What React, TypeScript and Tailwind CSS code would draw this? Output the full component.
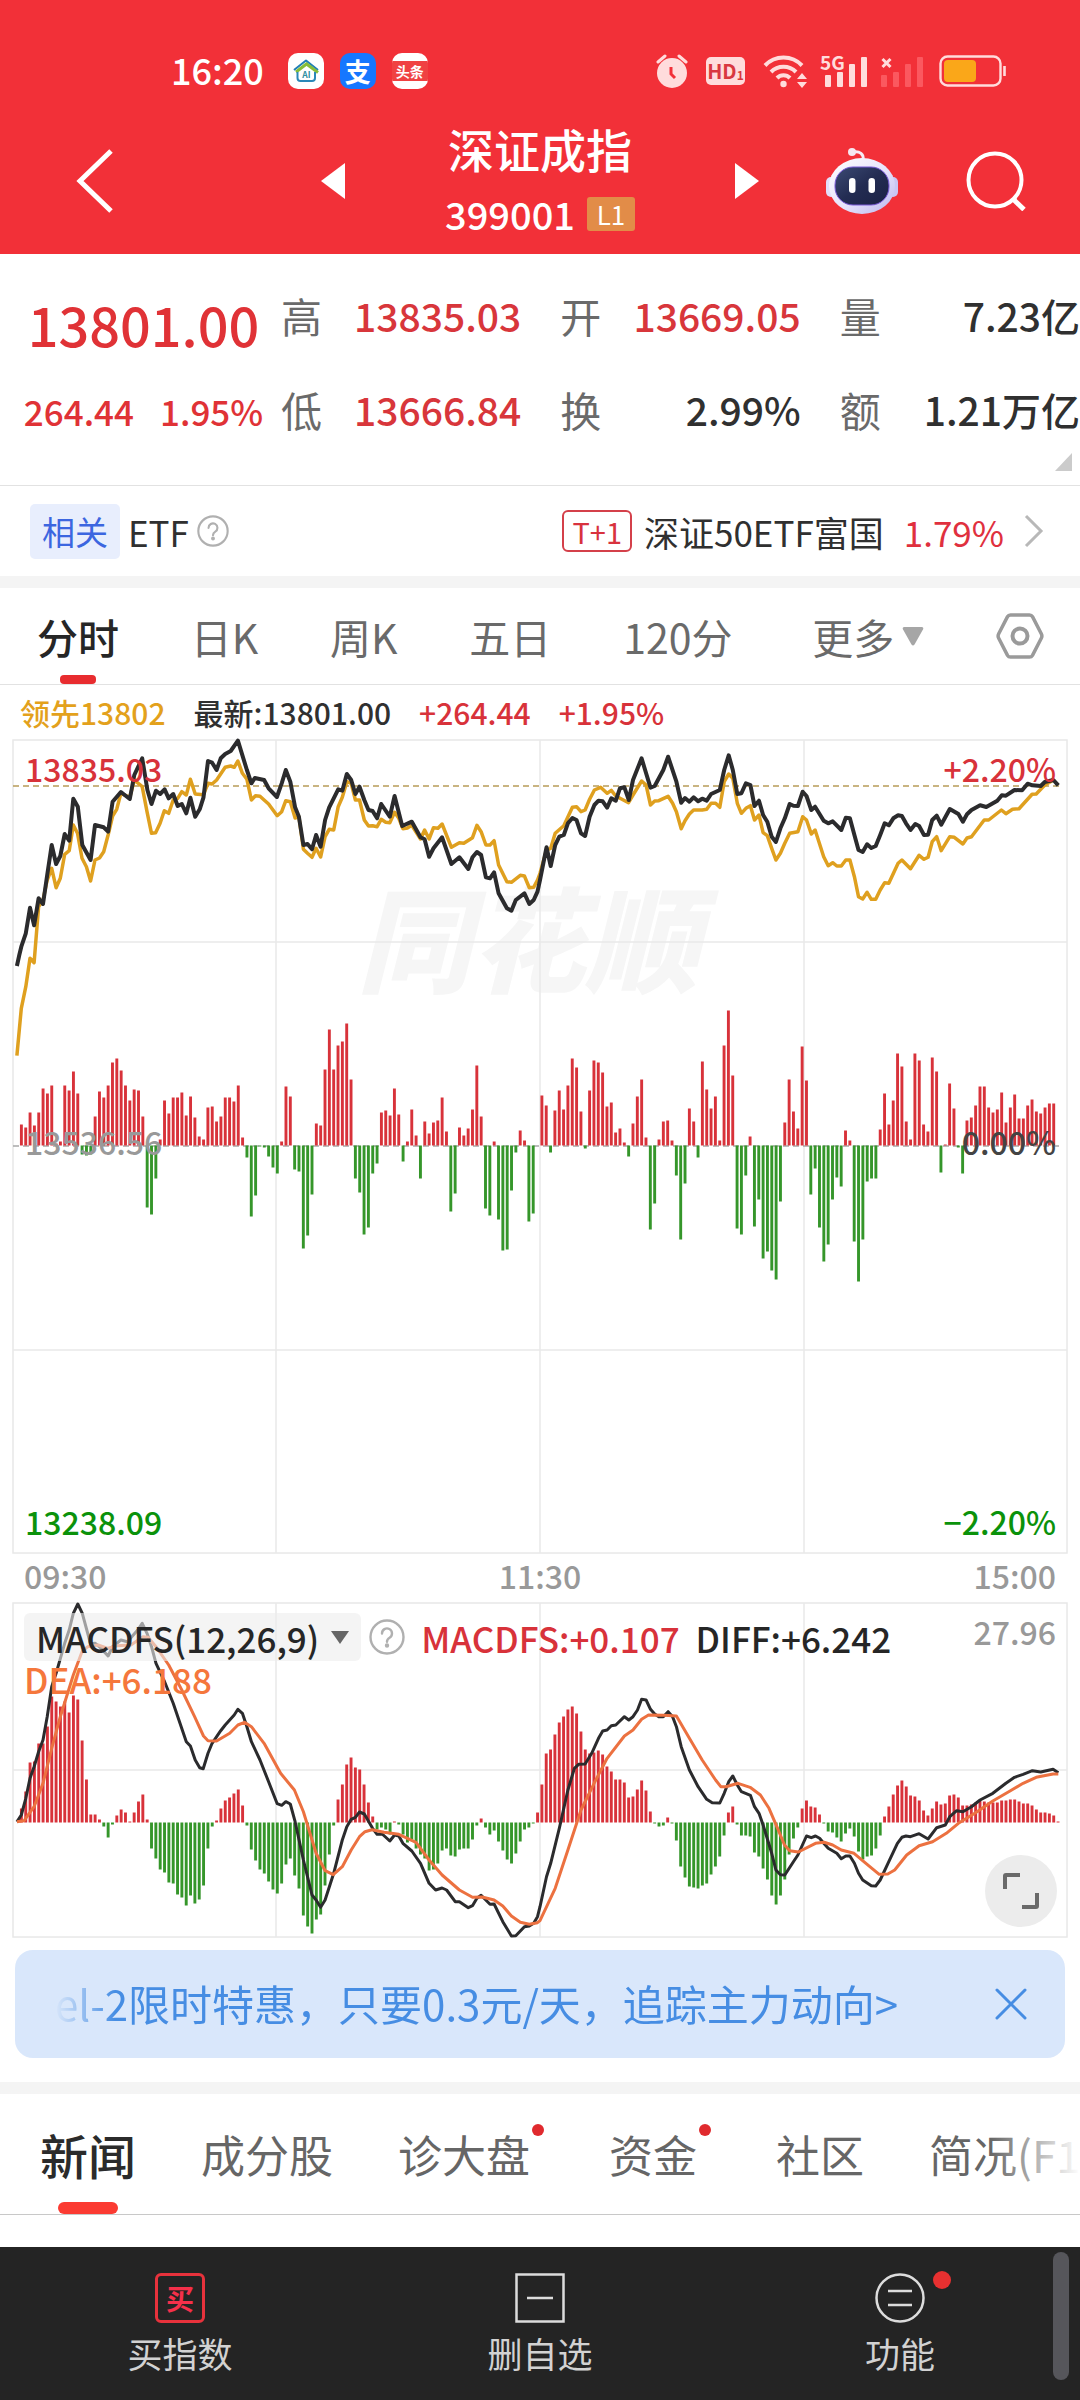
import React from "react";

const RED = "#d8323a";
const GREEN = "#35962a";
const INK = "#2b2b2d";

/* Minute bars above and below the zero line, one entry per minute from 09:31. */
const flow = [
  21, 18, 33, 20, 33, 57, 52, 60, 2, 4, 60, 55, 74, 52, -9, -10, -9, 29, 54, 48, 60, 83, 87, 75, 60, 45, 56, 55, 29, -62,
  -69, -33, 6, 45, 32, 48, 48, 53, 30, 49, 28, 9, 6, 38, 39, 24, 29, 48, 48, 44, 60, 8, -12, -71, -50, -1, -2, -11, -22, -28,
  4, 59, 49, -24, -26, -103, -90, -49, 22, 20, 76, 116, 76, 100, 104, 122, 66, -33, -47, -89, -82, -28, -18, 33, 35, 30, 57, 31, -16, 4,
  36, 10, -33, 24, 12, 23, 25, 48, 14, -66, -48, 18, 10, 17, 36, 80, 29, -63, -70, 4, -74, -105, -104, -45, -7, 15, 5, -76, -68, 0,
  50, 40, -7, 35, 55, 36, 60, 87, 78, 34, -3, 55, 85, 83, 73, 39, 43, 13, 17, 3, -11, 22, 49, 66, 8, -84, -58, 6, 24, 25,
  5, -30, -94, -38, 37, 24, -12, 84, 56, 37, 49, 5, 100, 135, 70, -83, -89, -30, 9, -81, -54, -113, -106, -125, -134, -56, 23, 66, 34, 17,
  99, 65, -49, -23, -82, -116, -99, -54, -32, -41, 15, 5, -96, -136, -94, -36, -33, -33, 16, 52, 21, 45, 92, 79, 24, 6, 92, 85, 21, 14,
  88, 74, -27, 1, 62, 37, -2, -28, 25, 28, 40, 59, 59, 38, 33, 36, 53, 23, 38, 51, 27, 27, 40, 46, 34, 32, 38, 42, 42, 0,
];

const macd = [
  14, 31, 60, 61, 79, 79, 96, 126, 121, 116, 121, 110, 127, 123, 82, 43, 8, 8, 3, -4, -15, -2, 7, 13, 10, 1, 10, 21, 28, 3,
  -26, -36, -47, -50, -60, -61, -72, -75, -83, -73, -81, -77, -63, -26, -4, 2, 14, 22, 25, 29, 33, 17, -3, -27, -38, -47, -51, -59, -67, -71,
  -61, -42, -36, -53, -66, -93, -104, -111, -97, -92, -63, -32, -3, 23, 38, 58, 65, 55, 53, 38, 20, 6, -7, -5, -7, -12, 1, -2, -12, -20,
  -17, -26, -32, -36, -48, -47, -41, -28, -26, -33, -34, -27, -26, -26, -17, -3, 4, -5, -12, -8, -19, -28, -37, -41, -31, -19, -7, -5, -1, 10,
  38, 69, 73, 88, 100, 106, 113, 116, 109, 91, 73, 69, 70, 72, 68, 56, 51, 43, 43, 40, 25, 26, 33, 42, 32, 11, -1, -4, -3, 5,
  -1, -18, -44, -55, -64, -65, -66, -63, -61, -52, -44, -34, -13, 10, 16, -2, -13, -13, -14, -30, -34, -46, -57, -73, -82, -73, -57, -32, -16, -5,
  14, 22, 16, 15, 8, -1, -9, -10, -15, -19, -11, -6, -14, -29, -37, -34, -33, -26, -13, 6, 16, 28, 37, 42, 36, 27, 26, 22, 12, 7,
  14, 21, 18, 19, 27, 28, 25, 17, 17, 18, 20, 22, 21, 20, 20, 20, 22, 22, 23, 23, 21, 19, 19, 17, 13, 10, 10, 9, 7, 1,
];

/* Line samples, stored at about three times the chart's scale, one string per half of the session. */
const price = [
  "49,738 56,705 62,680 75,640 87,563 99,616 112,535 125,552 137,465 150,375 163,432 175,408 188,342 201,362 213,236 226,260 239,375 263,420 276,315 301,322 314,335 327,245 351,216 377,237 390,165 413,115 428,210 440,252 453,212 465,222 478,208 490,235 503,222 516,258 528,252 541,280 553,233 567,290 580,268 591,232 604,123 616,128 629,150 641,115 654,102 670,93 691,62 717,150 730,190 740,174 767,180 780,205 804,231 818,190 830,150 843,185 857,262 868,290 881,375 893,372 906,388 918,345 931,380 944,300 956,262 969,235 982,208 994,212 1007,162 1020,180 1032,222 1044,200 1058,240 1070,270 1082,273 1095,295 1107,252 1132,290 1146,228 1168,318 1196,305 1221,352 1233,358 1246,410 1259,385 1284,352 1311,432 1334,412 1360,447 1372,412 1385,396 1397,405 1411,472 1423,475 1435,457 1448,520 1472,565 1485,572 1498,540 1523,520 1537,552 1550,540 1561,515",
  "0,480 19,382 31,438 44,375 56,350 69,345 81,310 94,294 106,300 119,340 131,348 144,290 158,255 170,242 182,244 195,263 207,235 220,242 232,205 245,202 258,240 270,180 295,115 308,160 321,203 333,198 358,150 372,110 396,185 410,248 421,234 434,245 446,232 459,244 471,236 484,242 497,222 522,210 535,150 548,106 560,150 573,222 585,220 598,190 611,195 623,258 636,242 648,285 660,305 673,350 685,366 698,325 711,295 725,252 736,257 749,258 763,215 774,228 788,270 799,260 824,302 837,310 850,304 875,330 888,293 900,295 913,345 925,390 937,396 950,373 962,384 975,378 988,345 1001,310 1013,316 1026,295 1040,286 1051,288 1063,310 1076,330 1090,312 1101,318 1115,345 1127,344 1139,300 1152,287 1165,314 1190,267 1215,282 1228,305 1240,283 1253,270 1278,256 1296,261 1328,242 1341,226 1353,227 1378,210 1400,211 1416,191 1430,196 1454,198 1466,186 1491,180 1505,196",
];
const lead = [
  "49,1007 62,865 75,800 87,715 99,728 112,560 125,540 137,480 150,445 163,503 175,475 188,403 201,392 213,315 225,340 238,415 251,440 263,483 276,420 289,414 301,395 314,345 327,288 339,268 351,220 377,232 390,180 413,200 427,275 440,340 452,338 465,310 477,272 490,280 503,240 516,235 528,215 541,225 553,178 567,222 591,224 604,190 616,192 629,180 654,142 670,138 680,142 691,123 704,160 717,178 730,240 742,227 755,229 767,240 780,252 805,287 818,275 830,242 843,245 857,294 868,290 881,388 893,400 906,412 918,385 931,411 944,350 956,328 969,330 982,260 994,232 1007,185 1020,190 1032,240 1044,240 1058,300 1070,318 1082,317 1095,320 1107,298 1120,307 1132,308 1146,277 1158,295 1170,326 1183,324 1196,316 1221,357 1233,330 1246,357 1259,323 1272,325 1284,312 1311,382 1334,368 1347,370 1372,353 1385,316 1397,335 1411,375 1423,375 1435,362 1448,435 1472,485 1485,487 1511,466 1523,468 1537,503 1550,502 1561,480",
  "0,460 19,390 31,385 44,340 69,317 94,262 106,260 119,275 131,270 144,238 158,210 176,202 195,220 207,211 220,228 257,248 270,225 295,183 308,195 321,255 333,243 345,242 372,229 385,250 396,275 410,326 421,302 434,282 446,270 471,270 484,268 497,250 510,250 522,262 535,185 548,162 560,175 573,250 585,280 598,265 611,257 623,300 636,285 648,338 660,347 673,385 685,420 698,400 711,370 725,340 749,335 763,290 774,300 788,342 799,330 824,410 837,437 850,428 862,438 875,438 888,420 900,420 913,470 925,530 937,537 950,517 962,538 975,538 988,510 1001,488 1013,490 1040,430 1051,420 1076,446 1101,406 1115,418 1127,412 1139,365 1152,350 1165,392 1190,350 1203,352 1228,372 1240,354 1253,350 1290,300 1303,300 1340,270 1353,281 1372,268 1391,266 1429,223 1441,222 1466,195 1491,180",
];
const diff = [
  "49,965 62,945 75,895 87,835 99,800 112,755 125,720 137,650 150,560 163,520 188,430 201,390 213,340 226,312 239,340 263,432 276,430 289,440 314,468 327,440 351,420 370,425 400,390 413,370 427,400 440,440 453,490 478,545 503,610 541,725 553,738 567,780 580,803 590,806 604,760 616,730 641,692 654,675 680,645 691,628 704,640 717,680 730,725 755,780 780,845 805,911 818,916 830,905 843,912 857,965 881,1080 906,1185 918,1200 931,1222 944,1200 969,1120 994,1020 1007,980 1020,958 1032,952 1044,936 1058,942 1082,985 1095,1003 1110,1002 1132,1023 1146,1005 1158,1008 1170,1030 1196,1053 1221,1090 1246,1150 1265,1170 1284,1164 1297,1170 1322,1205 1334,1205 1360,1223 1372,1217 1385,1195 1397,1186 1423,1213 1435,1212 1460,1265 1485,1308 1498,1307 1523,1280 1537,1278 1550,1270 1561,1250",
  "0,1220 19,1130 31,1090 56,985 81,870 100,805 112,793 131,792 150,760 170,715 182,693 195,690 207,677 220,675 245,650 258,660 270,650 283,630 295,598 308,600 321,628 333,642 345,650 358,650 372,635 385,650 396,680 410,740 434,810 459,860 484,898 500,908 522,909 535,880 548,845 560,828 573,855 585,875 611,886 623,920 636,940 648,975 673,1060 685,1110 698,1124 711,1125 736,1085 749,1065 774,1008 788,1013 800,1008 812,1015 824,1030 837,1045 862,1060 875,1076 888,1068 900,1068 913,1090 925,1120 937,1140 962,1157 975,1158 988,1140 1013,1085 1038,1030 1051,1012 1063,1008 1076,1010 1101,1001 1127,1017 1152,983 1177,975 1190,950 1210,932 1228,935 1253,920 1278,900 1315,880 1353,850 1378,832 1403,823 1430,812 1454,816 1490,808 1505,818",
];
const dea = [
  "49,965 70,962 99,920 125,850 150,745 175,650 213,525 238,455 255,440 285,435 314,445 340,437 380,435 415,410 430,412 453,440 490,495 528,570 565,650 591,708 604,722 629,723 667,700 691,675 710,667 730,680 767,730 815,820 855,870 881,935 918,1060 944,1112 968,1124 994,1100 1020,1050 1044,1010 1060,995 1080,989 1115,997 1158,1003 1208,1027 1246,1080 1284,1125 1334,1170 1372,1192 1400,1191 1435,1200 1460,1218 1485,1248 1511,1267 1537,1273 1561,1268",
  "0,1262 44,1165 81,1050 119,930 157,850 195,775 245,708 270,690 295,658 315,645 360,646 396,648 434,715 471,780 510,840 525,860 540,860 575,850 610,862 640,885 665,925 690,985 710,1035 725,1052 750,1056 800,1030 825,1027 850,1035 875,1050 912,1060 950,1093 985,1123 1010,1122 1030,1110 1065,1065 1101,1037 1140,1025 1180,1000 1215,970 1265,938 1315,903 1365,873 1403,850 1441,832 1490,822 1505,822",
];

const toPoints = (halves: string[], top: number) =>
  halves
    .flatMap((half, h) =>
      half.split(" ").map((pair) => {
        const [x, y] = pair.split(",").map(Number);
        return `${(x / 2.904 + h * 540).toFixed(1)},${(y / 3 + top).toFixed(1)}`;
      }),
    )
    .join(" ");

function Bars({ values, zero }: { values: number[]; zero: number }) {
  return (
    <g>
      {values.map((v, i) => (
        <rect
          key={i}
          x={17 + (i + 1) * 4.3375 - 1.4}
          y={v >= 0 ? zero - v : zero}
          width={2.9}
          height={Math.abs(v)}
          fill={v >= 0 ? RED : GREEN}
        />
      ))}
    </g>
  );
}

function Grid({ top, bottom, rows }: { top: number; bottom: number; rows: number[] }) {
  return (
    <g stroke="#e8e8e8" strokeWidth="1.5" fill="none">
      <rect x="13" y={top} width="1054" height={bottom - top} />
      {[276, 540, 804].map((x) => (
        <line key={x} x1={x} x2={x} y1={top} y2={bottom} />
      ))}
      {rows.map((y) => (
        <line key={y} x1="13" x2="1067" y1={y} y2={y} />
      ))}
    </g>
  );
}

function Help({ className }: { className: string }) {
  return (
    <svg className={className} viewBox="0 0 36 36" fill="none" stroke="#b0b0b0" strokeWidth="2.4" aria-hidden="true">
      <circle cx="18" cy="18" r="16.5" />
      <path d="M13 14.5a5 5 0 1 1 7.6 4.2c-1.800 1.100-2.600 1.900-2.600 4" strokeLinecap="round" />
      <circle cx="18" cy="26.500" r="1" fill="#b0b0b0" />
    </svg>
  );
}

function StatusBar() {
  return (
    <div className="flex h-[116px] items-center justify-between pt-[26px] pr-[74px] pl-[171px] text-white">
      <div className="flex items-center gap-4">
        <time className="mr-2 pb-1 text-[36px] leading-none font-medium">16:20</time>
        <svg className="size-9" viewBox="0 0 36 36" aria-label="AI home">
          <rect width="36" height="36" rx="10" fill="#fff" />
          <path d="M6 17 18 7.500 30 17" fill="none" stroke="#1f7fb5" strokeWidth="2" strokeLinejoin="round" />
          <path d="M8 19 18.500 11 30 19.500" fill="none" stroke="#86bd3a" strokeWidth="3" />
          <path d="M9.500 19v6q0 3 3 3h11.500q3 0 3-3v-6" fill="none" stroke="#2a88b8" strokeWidth="2" />
          <text x="18.500" y="25" textAnchor="middle" fontSize="8.500" fontWeight="700" fill="#3090a0">AI</text>
        </svg>
        <span className="flex size-9 items-center justify-center rounded-[10px] bg-[#1677ff] text-[26px] leading-none font-bold">支</span>
        <span className="flex size-9 items-center overflow-hidden rounded-[10px] bg-white">
          <span className="flex h-5 w-full items-center justify-center bg-[#f04142] text-[14px] leading-none font-bold">头条</span>
        </span>
      </div>
      <div className="flex items-center gap-[13px]">
        <svg className="mr-[5px]" width="32" height="36" viewBox="0 0 32 36" fill="none" stroke="#ffdcdc" aria-label="Alarm">
          <circle cx="16" cy="20" r="15" fill="#ffdcdc" stroke="none" />
          <path d="M2 9 9 3M30 9 23 3" strokeWidth="3" strokeLinecap="round" />
          <path d="M15 14v7l4 4" stroke="#f23038" strokeWidth="3" />
        </svg>
        <span className="mr-[5px] flex h-7 w-[39px] items-center justify-center rounded-[5px] bg-[#ffdcdc] text-[20px] leading-none font-bold text-[#d93840]">
          HD<span className="pt-2 text-[12px] leading-none">1</span>
        </span>
        <svg width="45" height="36" viewBox="0 0 45 36" fill="none" stroke="#ffdcdc" strokeWidth="4" aria-label="Wi-Fi">
          <path d="M2 12.500a25.500 25.500 0 0 1 37 0M8 19a17.500 17.500 0 0 1 25 0M14 25a9 9 0 0 1 13 0" />
          <circle cx="20.500" cy="31" r="3.200" fill="#ffdcdc" stroke="none" />
          <path d="m34 26 5-6 5 6zM34 29l5 6 5-6z" fill="#ffdcdc" stroke="none" />
        </svg>
        <svg className="overflow-visible" width="47" height="34" viewBox="0 0 47 34" fill="#ffdcdc" aria-label="5G signal">
          <rect x="4" y="21" width="6" height="12" rx="1" />
          <rect x="16" y="18" width="6" height="15" rx="1" />
          <rect x="28" y="10" width="6" height="23" rx="1" />
          <rect x="40" y="3" width="6" height="30" rx="1" />
          <text x="-1" y="16" fontSize="19" fontWeight="700">5G</text>
        </svg>
        <svg width="43" height="34" viewBox="0 0 43 34" fill="#ff6a70" aria-label="No signal">
          <path d="m1.500 5 8 8m0-8-8 8" stroke="#ffdcdc" strokeWidth="3" />
          <rect x="0" y="21" width="6" height="12" rx="1" opacity=".7" />
          <rect x="12" y="18" width="6" height="15" rx="1" opacity=".7" />
          <rect x="24" y="10" width="6" height="23" rx="1" opacity=".7" />
          <rect x="36" y="3" width="6" height="30" rx="1" opacity=".7" />
        </svg>
        <svg className="ml-0.5" width="67" height="32" viewBox="0 0 67 32" fill="none" aria-label="Battery">
          <rect x="1.500" y="1.500" width="60" height="29" rx="7" stroke="#ffdcdc" strokeWidth="2.400" />
          <rect x="5" y="5" width="32" height="22" rx="4" fill="#faa719" />
          <path d="M65.500 11v10" stroke="#ffdcdc" strokeWidth="2.600" />
        </svg>
      </div>
    </div>
  );
}

function Robot() {
  return (
    <svg width="72" height="68" viewBox="0 0 72 68" aria-hidden="true">
      <defs>
        <linearGradient id="shell" x1="0" y1="0" x2="1" y2="1">
          <stop offset="0" stopColor="#ffffff" />
          <stop offset=".55" stopColor="#e6e2fb" />
          <stop offset="1" stopColor="#b9b6ee" />
        </linearGradient>
        <linearGradient id="visor" x1="0" y1="0" x2="1" y2="1">
          <stop offset="0" stopColor="#3c4a74" />
          <stop offset=".5" stopColor="#232c52" />
          <stop offset="1" stopColor="#1b2145" />
        </linearGradient>
      </defs>
      <path d="M37 13c1-6-3-9-10-8" fill="none" stroke="#f6ecf6" strokeWidth="3" />
      <circle cx="26" cy="5" r="4" fill="#f6e6f0" />
      <rect x="0" y="30" width="10" height="20" rx="5" fill="#e2defa" />
      <rect x="62" y="30" width="10" height="20" rx="5" fill="#c9c6f4" />
      <ellipse cx="36" cy="39" rx="33" ry="28" fill="url(#shell)" />
      <rect x="9" y="20" width="54" height="38" rx="18" fill="url(#visor)" stroke="#7a5ad8" strokeWidth="1" />
      <rect x="23" y="31" width="6.500" height="15" rx="3.200" fill="#fff" />
      <rect x="42.500" y="31" width="6.500" height="15" rx="3.200" fill="#fff" />
    </svg>
  );
}

function Header() {
  return (
    <header className="bg-[#f23038] text-white">
      <StatusBar />
      <div className="grid h-[138px] grid-cols-[1fr_auto_1fr] items-center px-[54px] pb-2">
        <button type="button" aria-label="返回" className="pl-[21px] justify-self-start">
          <svg width="40" height="66" viewBox="0 0 40 66" fill="none" stroke="#fff" strokeWidth="5">
            <path d="M36 3 5 33 36 63" />
          </svg>
        </button>
        <div className="flex w-[438px] items-center justify-between">
          <button type="button" aria-label="上一个">
            <svg width="24" height="36" viewBox="0 0 24 36" fill="#fff"><path d="M24 0v36L0 18z" /></svg>
          </button>
          <div className="flex flex-col items-center gap-[10px]">
            <h1 className="text-[46px] leading-[56px] font-medium">深证成指</h1>
            <p className="flex items-center gap-3 text-[38px] leading-[56px] font-medium">
              399001
              <span className="flex h-[34px] w-12 items-center justify-center rounded-[3px] bg-[#e28c48] text-[26px] leading-none font-normal">L1</span>
            </p>
          </div>
          <button type="button" aria-label="下一个">
            <svg width="24" height="36" viewBox="0 0 24 36" fill="#fff"><path d="M0 0v36l24-18z" /></svg>
          </button>
        </div>
        <div className="flex items-center gap-[68px] justify-self-end">
          <button type="button" aria-label="智能助手"><Robot /></button>
          <button type="button" aria-label="搜索">
            <svg width="60" height="60" viewBox="0 0 60 60" fill="none" stroke="#fff" strokeWidth="4">
              <circle cx="29" cy="29" r="26.500" />
              <path d="m47 48 11 10.500" strokeWidth="5" />
            </svg>
          </button>
        </div>
      </div>
    </header>
  );
}

const quotes = [
  { label: "高", value: "13835.03", up: true },
  { label: "开", value: "13669.05", up: true },
  { label: "量", value: "7.23亿", up: false },
  { label: "低", value: "13666.84", up: true },
  { label: "换", value: "2.99%", up: false },
  { label: "额", value: "1.21万亿", up: false },
];

function Quotes() {
  return (
    <section className="relative flex border-b border-[#e2e2e2] pt-[14px] pb-[29px]">
      <div className="flex w-[281px] shrink-0 flex-col items-center pl-[6px] font-medium text-[#e03236]">
        <p className="text-[54px] leading-[112px]">13801.00</p>
        <p className="flex gap-[26px] text-[35px] leading-[62px]">
          <span>264.44</span>
          <span>1.95%</span>
        </p>
      </div>
      <dl className="grid flex-1 grid-cols-3 gap-x-[39px] text-[39px] leading-[94px]">
        {quotes.map((q) => (
          <div key={q.label} className="flex items-center justify-between whitespace-nowrap">
            <dt className="text-[41px] text-[#6a6a6a]">{q.label}</dt>
            <dd className={q.up ? "font-medium text-[#d8363b]" : "font-medium text-[#303030]"}>{q.value}</dd>
          </div>
        ))}
      </dl>
      <svg className="absolute right-2 bottom-[14px]" width="17" height="18" viewBox="0 0 17 18" fill="#cbcbcb" aria-hidden="true">
        <path d="M17 0v18H0z" />
      </svg>
    </section>
  );
}

function Related() {
  return (
    <section className="flex h-[90px] items-center justify-between pr-[36px] pl-[30px] text-[35px] leading-none text-[#303030]">
      <div className="flex items-center gap-2">
        <span className="rounded-[5px] bg-[#e8eefd] px-3 text-[33px] leading-[55px] text-[#3c66e0]">相关</span>
        ETF
        <button type="button" aria-label="说明"><Help className="size-8" /></button>
      </div>
      <a href="#etf" className="flex items-center">
        <span className="rounded-[6px] border-2 border-[#d4404a] px-2 text-[29px] leading-[38px] text-[#d8323e]">T+1</span>
        <span className="ml-3">深证50ETF富国</span>
        <span className="ml-5 text-[#e0303e]">1.79%</span>
        <svg className="ml-5" width="20" height="34" viewBox="0 0 20 34" fill="none" stroke="#b8b8b8" strokeWidth="3" aria-hidden="true">
          <path d="m2 2 15 15L2 32" />
        </svg>
      </a>
    </section>
  );
}

function PeriodTabs() {
  return (
    <nav className="flex h-[97px] items-center justify-between border-b border-[#e2e2e2] pr-9 pl-[37px] text-[41px] leading-none text-[#6a6a6a]">
      <button type="button" aria-current="true" className="relative h-full font-medium text-[#262626]">
        分时
        <span className="absolute bottom-0 left-1/2 h-[9px] w-9 -translate-x-1/2 rounded-[4px] bg-[#e82c2f]" />
      </button>
      {["日K", "周K", "五日", "120分"].map((t) => (
        <button key={t} type="button">{t}</button>
      ))}
      <button type="button" className="flex items-center gap-2 pl-2">
        更多
        <svg width="22" height="19" viewBox="0 0 22 19" fill="#a6a6a6" aria-hidden="true">
          <path d="M2 0h18q2 .5 1 2.500L12.500 17.500q-1.500 2-3 0L1 2.500Q0 .5 2 0z" />
        </svg>
      </button>
      <button type="button" aria-label="设置">
        <svg width="48" height="46" viewBox="0 0 48 46" fill="none" stroke="#9a9a9a">
          <path d="M14.500 2h19q2 0 3 1.700l8.800 17q1.200 2.300 0 4.600l-8.800 17Q35.500 44 33.500 44h-19q-2 0-3-1.700l-8.800-17q-1.200-2.300 0-4.600l8.800-17Q12.500 2 14.500 2z" strokeWidth="3.500" />
          <circle cx="24" cy="23" r="7.500" strokeWidth="4" />
        </svg>
      </button>
    </nav>
  );
}

function PriceChart() {
  return (
    <section className="mx-3">
      <p className="flex gap-7 pl-2 text-[30px] leading-[55px] font-medium text-[#d8323a]">
        <span className="text-[#e3a11c]">领先13802</span>
        <span className="text-[#303030]">最新:13801.00</span>
        <span>+264.44</span>
        <span>+1.95%</span>
      </p>
      <div className="relative text-[32px] leading-none font-medium">
        <svg className="block h-auto w-full overflow-visible" viewBox="12 740 1056 813" role="img" aria-label="分时走势">
          <text x="528" y="984" textAnchor="middle" fontSize="114" fontWeight="900" fontStyle="italic" fill="#f6f6f6">同花顺</text>
          <Grid top={740} bottom={1553} rows={[942, 1350]} />
          <line x1="13" x2="1062" y1="786" y2="786" stroke="#b89c58" strokeWidth="1.500" strokeDasharray="6 4" />
          <line x1="13" x2="1062" y1="1146" y2="1146" stroke="#a8a8a8" strokeWidth="1.500" strokeDasharray="6 4" />
          <Bars values={flow} zero={1145.500} />
          <polyline points={toPoints(lead, 720)} fill="none" stroke="#dfa01f" strokeWidth="3.500" strokeLinejoin="round" />
          <polyline points={toPoints(price, 720)} fill="none" stroke={INK} strokeWidth="4" strokeLinejoin="round" />
        </svg>
        <span className="absolute top-3 left-[13px] text-[#d8323a]">13835.03</span>
        <span className="absolute top-3 right-3 text-[#d8323a]">+2.20%</span>
        <span className="absolute top-1/2 left-[13px] -translate-y-[22px] text-[#999]">13536.56</span>
        <span className="absolute top-1/2 right-3 -translate-y-[22px] text-[#444]">0.00%</span>
        <span className="absolute bottom-4 left-[13px] text-[#0b920b]">13238.09</span>
        <span className="absolute right-3 bottom-4 text-[#0b920b]">−2.20%</span>
      </div>
      <div className="flex justify-between px-3 pb-1 text-[32px] leading-[45px] font-medium text-[#999]">
        <time>09:30</time>
        <time>11:30</time>
        <time>15:00</time>
      </div>
    </section>
  );
}

function MacdChart() {
  return (
    <section className="relative mx-3">
      <svg className="block h-auto w-full" viewBox="12 1602 1056 336" role="img" aria-label="MACDFS">
        <Grid top={1603} bottom={1937} rows={[1770]} />
        <Bars values={macd} zero={1822.500} />
        <polyline points={toPoints(diff, 1500)} fill="none" stroke={INK} strokeWidth="3" strokeLinejoin="round" />
        <polyline points={toPoints(dea, 1500)} fill="none" stroke="#ec7140" strokeWidth="3" strokeLinejoin="round" />
      </svg>
      <div className="absolute inset-x-3 top-[11px] text-[35px] leading-none font-medium">
        <div className="flex items-center">
          <button type="button" className="flex h-12 items-center gap-3 rounded-[6px] bg-[#ececec]/60 px-3 text-[#262626]">
            MACDFS(12,26,9)
            <svg width="18" height="13" viewBox="0 0 18 13" fill="#666" aria-hidden="true"><path d="M0 0h18L9 13z" /></svg>
          </button>
          <button type="button" aria-label="指标说明" className="ml-2"><Help className="size-9" /></button>
          <span className="ml-4 text-[#d8323a]">MACDFS:+0.107</span>
          <span className="ml-4 text-[#262626]">DIFF:+6.242</span>
          <span className="mb-3 ml-auto text-[32px] text-[#999]">27.96</span>
        </div>
        <p className="text-[#f5773c]">DEA:+6.188</p>
      </div>
      <button type="button" aria-label="全屏" className="absolute right-[11px] bottom-[11px] flex size-[72px] items-center justify-center rounded-full bg-[#ececec]">
        <svg width="38" height="38" viewBox="0 0 38 38" fill="none" stroke="#6a6a6a" strokeWidth="4">
          <path d="M3 17V4q0-1 1-1h14M35 21v13q0 1-1 1H20" />
        </svg>
      </button>
    </section>
  );
}

function Banner() {
  return (
    <aside className="mx-[15px] mt-3 mb-6 flex h-[108px] items-center justify-between rounded-[18px] bg-[#d9e7fb] pr-[38px] pl-10 text-[#468de3]">
      <a href="#level2" className="overflow-hidden pb-0.5 text-[42px] leading-[60px] whitespace-nowrap [mask-image:linear-gradient(to_right,transparent,black_60px)]">
        el-2限时特惠，只要0.3元/天，追踪主力动向&gt;
      </a>
      <button type="button" aria-label="关闭">
        <svg width="32" height="32" viewBox="0 0 32 32" fill="none" stroke="currentColor" strokeWidth="3" strokeLinecap="round">
          <path d="m2 2 28 28M30 2 2 30" />
        </svg>
      </button>
    </aside>
  );
}

const newsTabs = [
  { name: "成分股", dot: false },
  { name: "诊大盘", dot: true },
  { name: "资金", dot: true },
  { name: "社区", dot: false },
  { name: "简况(F10)", dot: false },
];

function NewsTabs() {
  return (
    <nav className="relative flex h-[121px] items-center gap-[65px] overflow-hidden border-b border-[#c8c8c8] pl-10 text-[44px] leading-none whitespace-nowrap text-[#666]">
      <button type="button" aria-current="true" className="relative h-full text-[48px] font-medium text-[#2b2b2b]">
        新闻
        <span className="absolute bottom-0 left-1/2 h-3 w-[60px] -translate-x-1/2 rounded-[6px] bg-[#fb3b32]" />
      </button>
      {newsTabs.map((t) => (
        <button key={t.name} type="button" className={t.dot ? "relative pr-[14px]" : "relative"}>
          {t.name}
          {t.dot && <span className="absolute -top-2 right-0 size-3 rounded-full bg-[#e02a2e]" />}
        </button>
      ))}
      <span className="pointer-events-none absolute inset-y-0 right-0 w-[90px] bg-linear-to-r from-transparent to-white" />
    </nav>
  );
}

function BottomBar() {
  return (
    <footer className="relative grid h-[153px] grid-cols-3 bg-[#242424] text-[35px] leading-none text-[#d2d2d2]">
      <button type="button" className="flex flex-col items-center gap-3 pt-[26px]">
        <span className="flex size-[50px] items-center justify-center rounded-[6px] border-3 border-[#e8323c] text-[28px] leading-none font-bold text-[#f5304a]">买</span>
        买指数
      </button>
      <button type="button" className="flex flex-col items-center gap-3 pt-[26px]">
        <svg width="50" height="50" viewBox="0 0 50 50" fill="none" stroke="#dcdcdc" strokeWidth="2.500">
          <rect x="1.500" y="1.500" width="47" height="47" />
          <path d="M12 25h26" />
        </svg>
        删自选
      </button>
      <button type="button" className="flex flex-col items-center gap-3 pt-[26px]">
        <span className="relative">
          <svg width="50" height="50" viewBox="0 0 50 50" fill="none" stroke="#dcdcdc" strokeWidth="2.500">
            <circle cx="25" cy="25" r="23.500" />
            <path d="M13 18h24M13 32h24" />
          </svg>
          <span className="absolute -top-0.5 -right-[26px] size-[18px] rounded-full bg-[#e83030]" />
        </span>
        功能
      </button>
      <span className="absolute top-[5px] right-[11px] h-32 w-4 rounded-full bg-[#56565b]" />
    </footer>
  );
}

export default function App() {
  return (
    <div className="flex min-h-screen w-full flex-col bg-white font-['Noto_Sans_CJK_SC',sans-serif]">
      <Header />
      <main className="flex-1">
        <Quotes />
        <Related />
        <div className="h-3 bg-[#f4f4f4]" />
        <PeriodTabs />
        <PriceChart />
        <MacdChart />
        <Banner />
        <div className="h-3 bg-[#f4f4f4]" />
        <NewsTabs />
      </main>
      <BottomBar />
    </div>
  );
}
